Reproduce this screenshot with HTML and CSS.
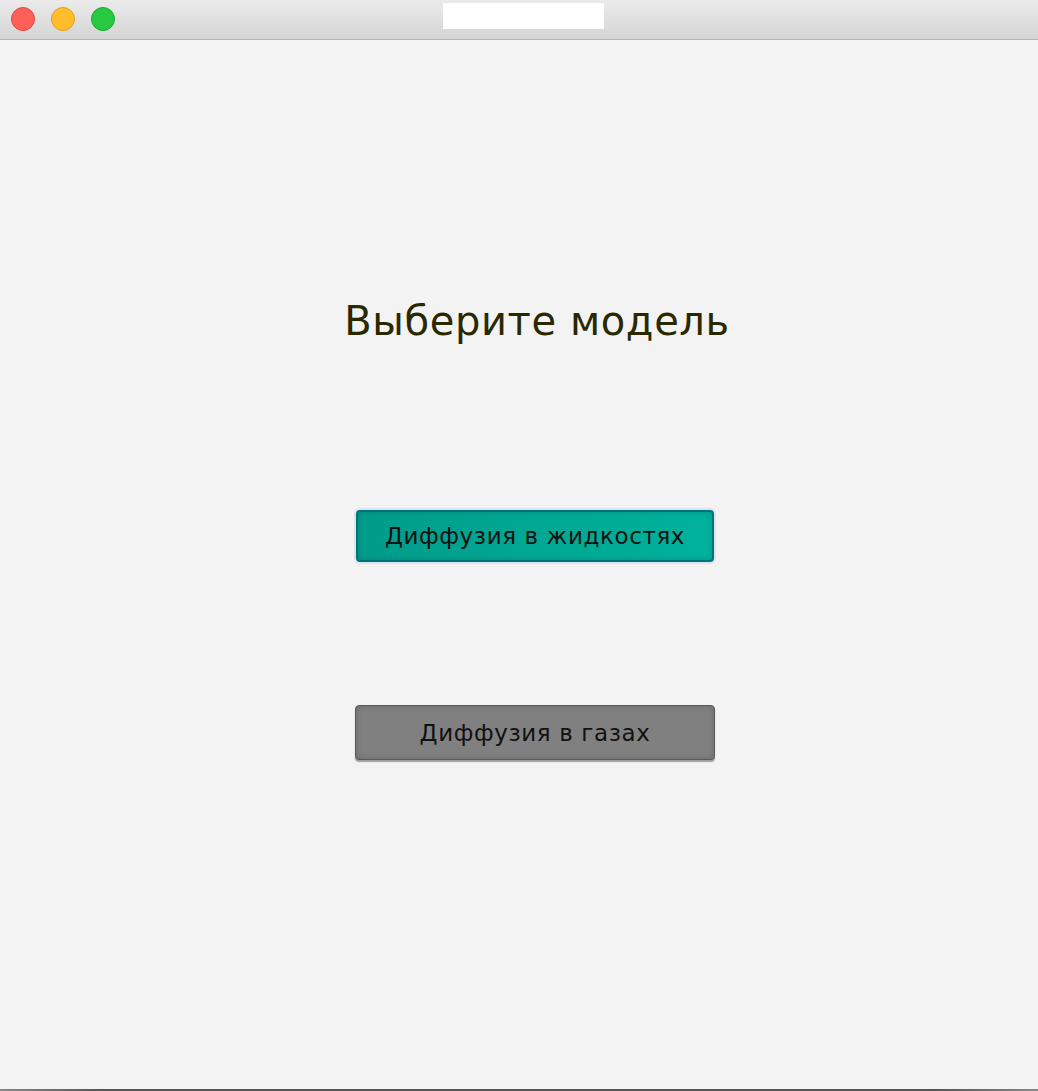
FILE: index.html
```html
<!DOCTYPE html>
<html lang="ru">
<head>
<meta charset="utf-8">
<title>Модель</title>
<link rel="stylesheet" href="styles.css">
</head>
<body>
<div class="window">
  <header class="titlebar">
    <div class="lights">
      <span class="light red"></span>
      <span class="light yellow"></span>
      <span class="light green"></span>
    </div>
    <div class="title-box"></div>
  </header>
  <main class="content">
    <h1 class="heading">Выберите модель</h1>
    <button class="btn btn-teal" type="button">Диффузия в жидкостях</button>
    <button class="btn btn-gray" type="button">Диффузия в газах</button>
  </main>
  <div class="bottom-edge"></div>
</div>
</body>
</html>
```

FILE: styles.css
```css
html, body {
  margin: 0;
  padding: 0;
}
body {
  width: 1038px;
  height: 1091px;
  overflow: hidden;
  background: #f3f3f3;
  font-family: "DejaVu Sans", "Liberation Sans", sans-serif;
}
.window {
  display: flex;
  flex-direction: column;
  height: 1091px;
}
.titlebar {
  position: relative;
  height: 40px;
  box-sizing: border-box;
  background: linear-gradient(#ebebeb, #d4d4d4);
  border-bottom: 1px solid #b4b4b4;
  flex: none;
}
.lights {
  display: flex;
  gap: 16px;
  padding: 7px 0 0 11px;
}
.light {
  width: 24px;
  height: 24px;
  border-radius: 50%;
  box-sizing: border-box;
}
.red { background: #fe5f57; border: 1px solid #e2463f; }
.yellow { background: #ffbd2e; border: 1px solid #e1a116; }
.green { background: #28c941; border: 1px solid #12ac28; }
.title-box {
  position: absolute;
  left: 443px;
  top: 3px;
  width: 161px;
  height: 26px;
  background: #ffffff;
}
.content {
  flex: 1;
  display: flex;
  flex-direction: column;
  align-items: center;
  padding-left: 32px;
}
.heading {
  margin: 257px 0 0 0;
  font-weight: normal;
  font-size: 40px;
  line-height: 48px;
  letter-spacing: 0.6px;
  color: #2a2800;
  padding-left: 4px;
}
.btn {
  font-family: "DejaVu Sans", "Liberation Sans", sans-serif;
  font-size: 23px;
  letter-spacing: 0.6px;
  color: #111;
  border-radius: 4px;
  box-sizing: border-box;
  width: 358px;
  height: 52px;
  padding: 0;
  cursor: pointer;
}
.btn-teal {
  margin-top: 165px;
  background: linear-gradient(90deg, #009c8a, #00a893 50%, #00b29c);
  border: 2px solid #00707a;
  box-shadow: 0 0 0 2px #d8e6ea, inset 0 0 6px rgba(0,0,0,0.15);
}
.btn-gray {
  margin-top: 143px;
  width: 360px;
  height: 55px;
  background: #808080;
  border: 1px solid #5a5a5a;
  box-shadow: 0 2px 1px #a0a0a0, inset 0 0 6px rgba(0,0,0,0.18);
}
.bottom-edge {
  height: 2px;
  background: linear-gradient(90deg, #888, #555 10%, #555 90%, #888);
  flex: none;
}
```
